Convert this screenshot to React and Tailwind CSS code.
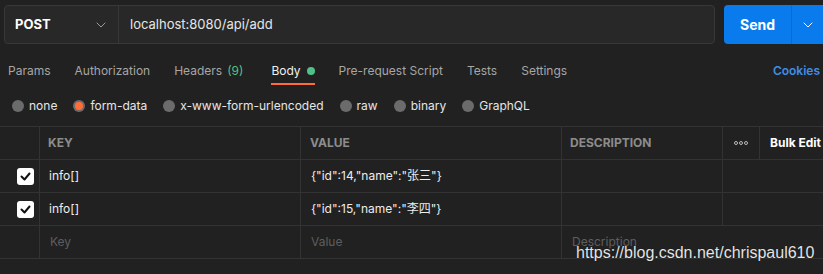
import React from 'react';

const tabs = [
  { label: 'Params' },
  { label: 'Authorization' },
  { label: 'Headers', count: '(9)' },
  { label: 'Body', active: true },
  { label: 'Pre-request Script' },
  { label: 'Tests' },
  { label: 'Settings' },
];

const bodyTypes = ['none', 'form-data', 'x-www-form-urlencoded', 'raw', 'binary', 'GraphQL'];

const rows = [
  { key: 'info[]', value: '{"id":14,"name":"张三"}' },
  { key: 'info[]', value: '{"id":15,"name":"李四"}' },
];

function Chevron({ className }) {
  return (
    <svg className={className} width="10" height="6" viewBox="0 0 10 6" fill="none">
      <path d="M1 1l4 4 4-4" stroke="currentColor" strokeWidth="1" strokeLinecap="round" strokeLinejoin="round" />
    </svg>
  );
}

function Checkbox() {
  return (
    <div className="w-[17px] h-[17px] rounded-[3px] bg-white flex items-center justify-center">
      <svg width="11" height="9" viewBox="0 0 11 9" fill="none">
        <path d="M1.5 4.5l3 3 5-6" stroke="#111" strokeWidth="2" strokeLinecap="round" strokeLinejoin="round" />
      </svg>
    </div>
  );
}

function Dots() {
  return (
    <svg width="14" height="4" viewBox="0 0 14 4" fill="none">
      <circle cx="2" cy="2" r="1.5" stroke="#c8c8c8" strokeWidth="0.9" />
      <circle cx="7" cy="2" r="1.5" stroke="#c8c8c8" strokeWidth="0.9" />
      <circle cx="12" cy="2" r="1.5" stroke="#c8c8c8" strokeWidth="0.9" />
    </svg>
  );
}

export default function App() {
  return (
    <div
      className="relative w-[823px] h-[274px] overflow-hidden bg-[#212121] text-[#e6e6e6]"
      style={{ fontFamily: 'Inter, "Noto Sans CJK SC", sans-serif' }}
    >
      {/* request bar */}
      <div className="flex pl-[4px] pt-[5px] h-[44px]">
        <div className="flex flex-1 rounded-[4px] border border-[#383838] bg-[#282828]">
          <div className="w-[114px] flex items-center justify-between pl-[10px] pr-[12px] border-r border-[#383838]">
            <span className="text-[13px] font-bold text-white">POST</span>
            <Chevron className="text-[#9a9a9a]" />
          </div>
          <div className="flex items-center pl-[11px] text-[13px] text-[#e6e6e6]">localhost:8080/api/add</div>
        </div>
        <div className="ml-[9px] w-[99px] shrink-0 flex rounded-l-[4px] bg-[#097bed]">
          <div className="w-[67px] flex items-center justify-center text-[14px] font-bold text-white">Send</div>
          <div className="flex-1 flex items-center justify-center border-l border-[#0a6ad0] text-white">
            <Chevron />
          </div>
        </div>
      </div>

      {/* tabs */}
      <div className="flex items-start justify-between pl-[8px] pr-[3px] mt-[14px] h-[25px]">
        <div className="flex gap-[24px]">
          {tabs.map((t) => (
            <div key={t.label} className="relative flex items-center h-[25px]">
              <span className={`text-[12px] ${t.active ? 'text-[#f0f0f0]' : 'text-[#a6a6a6]'}`}>{t.label}</span>
              {t.count && <span className="ml-[5px] pr-[4px] text-[12px] text-[#4fc087]">{t.count}</span>}
              {t.active && <span className="ml-[6px] w-[8px] h-[8px] rounded-full bg-[#4fc087]" />}
              {t.active && <span className="absolute left-0 right-0 bottom-[-2px] h-[2px] bg-[#ff6c37]" />}
            </div>
          ))}
        </div>
        <div className="h-[25px] flex items-center text-[12px] font-semibold text-[#3f8ee6]">Cookies</div>
      </div>

      {/* body type radios */}
      <div className="flex items-center gap-[16px] pl-[12px] mt-[13px] h-[20px]">
        {bodyTypes.map((b) => (
          <div key={b} className="flex items-center gap-[5px]">
            {b === 'form-data' ? (
              <span className="w-[12px] h-[12px] rounded-full bg-[#6b6b6b] flex items-center justify-center">
                <span className="w-[8px] h-[8px] rounded-full bg-[#ff6c37]" />
              </span>
            ) : (
              <span className="w-[12px] h-[12px] rounded-full bg-[#6b6b6b]" />
            )}
            <span className="text-[12px] text-[#e6e6e6]">{b}</span>
          </div>
        ))}
      </div>

      {/* params table */}
      <div className="mt-[10px] border-t border-[#333333]">
        <div className="flex h-[33px] border-b border-[#333333] text-[12px] font-bold">
          <div className="w-[40px] border-r border-[#333333]" />
          <div className="w-[261px] border-r border-[#333333] flex items-center pl-[8px] text-[#8c8c8c]">KEY</div>
          <div className="w-[261px] border-r border-[#333333] flex items-center pl-[9px] text-[#8c8c8c]">VALUE</div>
          <div className="w-[161px] border-r border-[#333333] flex items-center pl-[8px] text-[#8c8c8c]">DESCRIPTION</div>
          <div className="w-[37px] border-r border-[#333333] flex items-center justify-center">
            <Dots />
          </div>
          <div className="flex-1 flex items-center pl-[10px] text-white whitespace-nowrap">Bulk Edit</div>
        </div>
        {rows.map((r, i) => (
          <div key={i} className="flex h-[33px] border-b border-[#333333] text-[12px]">
            <div className="w-[40px] border-r border-[#333333] flex items-center justify-end pr-[5px]">
              <Checkbox />
            </div>
            <div className="w-[261px] border-r border-[#333333] flex items-center pl-[9px] text-[#ededed]">{r.key}</div>
            <div className="w-[261px] border-r border-[#333333] flex items-center pl-[10px] text-[#ededed]">{r.value}</div>
            <div className="w-[161px] border-r border-[#333333]" />
            <div className="flex-1" />
          </div>
        ))}
        <div className="flex h-[33px] border-b border-[#333333] text-[12px] text-[#5e5e5e]">
          <div className="w-[40px] border-r border-[#333333]" />
          <div className="w-[261px] border-r border-[#333333] flex items-center pl-[10px]">Key</div>
          <div className="w-[261px] border-r border-[#333333] flex items-center pl-[10px]">Value</div>
          <div className="flex-1 flex items-center pl-[10px]">Description</div>
        </div>
      </div>

      {/* watermark */}
      <div
        className="absolute left-[576px] top-[244px] text-[16px] leading-[18px] text-white/90"
        style={{ fontFamily: '"Liberation Sans", Arial, sans-serif', textShadow: '0 0 1px #000' }}
      >
        https://blog.csdn.net/chrispaul610
      </div>
    </div>
  );
}
